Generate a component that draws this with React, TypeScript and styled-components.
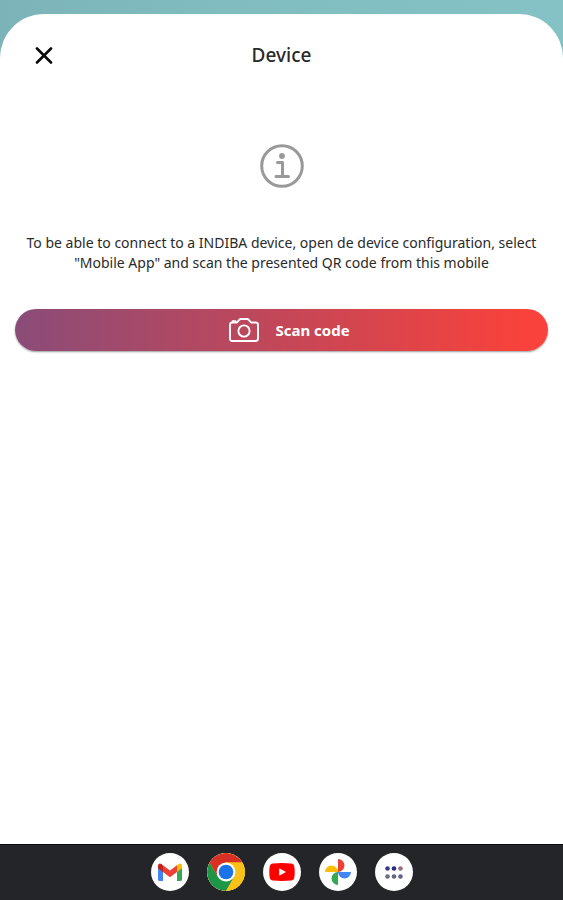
import React from "react";
import styled, { createGlobalStyle } from "styled-components";

const GlobalStyle = createGlobalStyle`
  *, *::before, *::after { box-sizing: border-box; }
  body {
    margin: 0;
    font-family: "Noto Sans", "Open Sans", sans-serif;
    color: #2a2a2a;
    background: #ffffff;
  }
  button { font: inherit; border: 0; padding: 0; cursor: pointer; }
`;

const Screen = styled.div`
  display: flex;
  flex-direction: column;
  min-height: 100vh;
  padding-top: 14px;
  background: linear-gradient(90deg, #7cb3b8 0%, #80bcc0 40%, #84c2c6 100%) #84c2c6;
`;

const Sheet = styled.main`
  flex: 1;
  display: flex;
  flex-direction: column;
  padding: 20px 15px;
  background: #ffffff;
  border-radius: 44px 44px 0 0;
`;

const Header = styled.header`
  display: grid;
  grid-template-columns: 42px 1fr 42px;
  align-items: center;
  height: 42px;
  padding: 0 8px;
`;

const CloseButton = styled.button`
  display: grid;
  place-items: center;
  width: 42px;
  height: 42px;
  background: transparent;
  color: #0a0a0a;
`;

const Title = styled.h1`
  margin: 0;
  text-align: center;
  font-size: 19px;
  line-height: 24px;
  font-weight: 500;
`;

const Content = styled.section`
  display: flex;
  flex-direction: column;
  align-items: center;
  padding-top: 68px;
  color: #999999;
`;

const Message = styled.p`
  margin: 45px 0 36px;
  text-align: center;
  font-size: 14px;
  line-height: 20px;
  color: #2a2a2a;
`;

const ScanButton = styled.button`
  display: flex;
  align-items: center;
  justify-content: center;
  gap: 16px;
  width: 100%;
  height: 42px;
  padding-left: 16px;
  border-radius: 21px;
  background: linear-gradient(90deg, #8a4c78 0%, #f8423b 95%);
  box-shadow: 0 1px 2px rgba(0, 0, 0, 0.4);
  color: #ffffff;
`;

const ScanLabel = styled.span`
  font-size: 15px;
  line-height: 20px;
  font-weight: 700;
`;

const Dock = styled.nav`
  display: flex;
  justify-content: center;
  align-items: center;
  gap: 18px;
  height: 56px;
  background: #242529;
  box-shadow: inset 0 1px 0 #0c0c0e;
`;

const AppButton = styled.button`
  display: grid;
  place-items: center;
  width: 38px;
  height: 38px;
  overflow: hidden;
  border-radius: 50%;
  background: #ffffff;
`;

const CloseIcon = () => (
  <svg width="18" height="18" viewBox="0 0 18 18" fill="none" stroke="currentColor" strokeWidth="2.6" strokeLinecap="round" aria-hidden="true">
    <path d="M2 2.5l14 14M16 2.5L2 16.5" />
  </svg>
);

const InfoIcon = () => (
  <svg width="44" height="44" viewBox="0 0 44 44" fill="none" stroke="currentColor" aria-hidden="true">
    <circle cx="22" cy="22" r="20.3" strokeWidth="3" />
    <circle cx="22" cy="12" r="2.9" fill="currentColor" stroke="none" />
    <path d="M17.5 18.5h5v13.5M16 32.5h12.5" strokeWidth="3" strokeLinejoin="round" strokeLinecap="round" />
  </svg>
);

const CameraIcon = () => (
  <svg width="30" height="24" viewBox="0 0 30 24" fill="none" stroke="currentColor" strokeWidth="1.9" strokeLinejoin="round" aria-hidden="true">
    <path d="M3.4 4.5H8L10.2 1.9Q10.9 1 12 1H18Q19.1 1 19.8 1.9L22 4.5H26.6Q29 4.5 29 6.9V20.6Q29 23 26.6 23H3.4Q1 23 1 20.6V6.9Q1 4.5 3.4 4.5Z" />
    <path d="M3.6 4V3.2H6.6V4" />
    <circle cx="15" cy="13" r="5.6" />
  </svg>
);

const GmailIcon = () => (
  <svg width="26" height="20" viewBox="0 0 26 20" aria-hidden="true">
    <path fill="#4285f4" d="M1 5l5 3.8V19H2.6Q1 19 1 17.4Z" />
    <path fill="#34a853" d="M20 8.8L25 5V17.4Q25 19 23.4 19H20Z" />
    <path fill="#fbbc04" d="M20 3.4L21.2 2.2Q25 .1 25 4.2V6.2L20 10Z" />
    <path fill="#c5221f" d="M1 4.2Q1 .1 4.8 2.2L6 3.4V10L1 6.2Z" />
    <path fill="#ea4335" d="M6 3.2L13 8.6L20 3.2V10L13 15.2L6 10Z" />
  </svg>
);

const ChromeIcon = () => (
  <svg width="38" height="38" viewBox="0 0 38 38" aria-hidden="true">
    <circle cx="19" cy="19" r="19" fill="#fbc116" />
    <path fill="#1e9648" d="M2.6 9.5A19 19 0 0 0 19 38L27.2 23.7L19 19L10.8 23.7Z" />
    <path fill="#d93025" d="M19 9.6H35.5A19 19 0 0 0 2.6 9.5L10.8 23.7Z" />
    <path fill="#fbc116" d="M19 9.6H35.5A19 19 0 0 1 19 38L27.2 23.7Z" />
    <circle cx="19" cy="19" r="9.4" fill="#ffffff" />
    <circle cx="19" cy="19" r="7.3" fill="#1a73e8" />
  </svg>
);

const YoutubeIcon = () => (
  <svg width="26" height="18" viewBox="0 0 26 18" aria-hidden="true">
    <path fill="#ff0000" d="M4 .5Q13-.4 22 .5Q25 .8 25.4 4Q26 9 25.4 14Q25 17.2 22 17.5Q13 18.4 4 17.5Q1 17.2.6 14Q0 9 .6 4Q1 .8 4 .5Z" />
    <path fill="#ffffff" d="M10.2 5.2L17 9L10.2 12.8Z" />
  </svg>
);

const PhotosIcon = () => (
  <svg width="26" height="26" viewBox="0 0 26 26" aria-hidden="true">
    <path fill="#ea4335" d="M13 0A6.5 6.5 0 0 1 13 13Z" />
    <path fill="#4285f4" d="M26 13A6.5 6.5 0 0 1 13 13Z" />
    <path fill="#34a853" d="M13 26A6.5 6.5 0 0 1 13 13Z" />
    <path fill="#fbbc04" d="M0 13A6.5 6.5 0 0 1 13 13Z" />
  </svg>
);

const dots = [
  { x: 2.5, y: 2.5, fill: "#3c3a86" },
  { x: 9, y: 2.5, fill: "#2c2c88" },
  { x: 15.5, y: 2.5, fill: "#94707f" },
  { x: 2.5, y: 10.5, fill: "#6c6c84" },
  { x: 9, y: 10.5, fill: "#65657f" },
  { x: 15.5, y: 10.5, fill: "#66628c" },
];

const AppsIcon = () => (
  <svg width="18" height="13" viewBox="0 0 18 13" aria-hidden="true">
    {dots.map((d) => (
      <circle key={`${d.x}-${d.y}`} cx={d.x} cy={d.y} r="2.3" fill={d.fill} />
    ))}
  </svg>
);

const apps = [
  { name: "Gmail", Icon: GmailIcon },
  { name: "Chrome", Icon: ChromeIcon },
  { name: "YouTube", Icon: YoutubeIcon },
  { name: "Photos", Icon: PhotosIcon },
  { name: "All apps", Icon: AppsIcon },
];

export default function App() {
  return (
    <>
      <GlobalStyle />
      <Screen>
        <Sheet>
          <Header>
            <CloseButton type="button" aria-label="Close">
              <CloseIcon />
            </CloseButton>
            <Title>Device</Title>
          </Header>
          <Content>
            <InfoIcon />
            <Message>
              To be able to connect to a INDIBA device, open de device configuration, select
              "Mobile App" and scan the presented QR code from this mobile
            </Message>
            <ScanButton type="button">
              <CameraIcon />
              <ScanLabel>Scan code</ScanLabel>
            </ScanButton>
          </Content>
        </Sheet>
        <Dock aria-label="Apps">
          {apps.map(({ name, Icon }) => (
            <AppButton key={name} type="button" aria-label={name}>
              <Icon />
            </AppButton>
          ))}
        </Dock>
      </Screen>
    </>
  );
}
